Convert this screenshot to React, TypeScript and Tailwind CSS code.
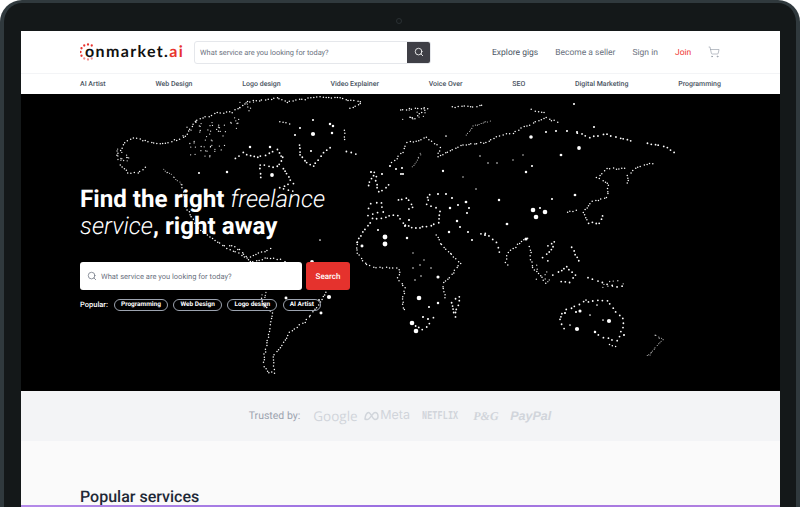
import React from "react";
import { Search, ShoppingCart } from "lucide-react";

type P = [number, number];
let seed = 7;
const rnd = () => {
  seed = (seed * 16807) % 2147483647;
  return seed / 2147483647;
};

// all map coordinates are page pixels; the svg origin is the hero's corner (21,94)
const chains: [number, P[]][] = [
  [3, [[233,112],[247,102],[277,98],[287,102],[317,97],[340,98],[363,103]]],
  [3, [[117,155],[123,145],[133,138],[143,140],[163,144],[183,138],[197,120],[217,113],[233,112]]],
  [3, [[120,165],[128,173],[138,173],[147,165]]],
  [2, [[163,170],[172,175],[182,185]]],
  [3, [[182,185],[187,210],[200,230],[227,248],[247,258],[273,248]]],
  [3, [[230,245],[240,250],[250,262],[268,258],[283,260]]],
  [3, [[327,290],[320,302],[307,320],[290,333],[280,347],[273,357],[275,373],[267,372],[263,363],[267,343],[272,313],[263,303],[260,295]]],
  [4, [[300,145],[300,155],[307,163],[313,166],[318,160],[327,150],[332,145]]],
  [3, [[280,122],[293,125]]],
  [3, [[345,130],[345,143]]],
  [4, [[347,152],[360,155]]],
  [4, [[235,158],[243,153],[257,158],[277,150],[283,158],[277,167],[260,165],[260,182]]],
  [4, [[283,168],[293,183],[280,188],[297,192]]],
  [3, [[350,108],[363,102]]],
  [3, [[453,107],[485,106]]],
  [3, [[400,110],[427,108],[415,118],[407,118]]],
  [3, [[392,163],[403,152],[407,143],[427,138],[440,147],[438,157],[450,150],[463,145],[483,143],[497,137],[513,133],[533,123],[547,118],[560,123]]],
  [4, [[577,133],[590,138],[607,134],[620,138],[635,142]]],
  [4, [[647,143],[667,147],[678,155]]],
  [2, [[467,135],[475,125],[492,121]]],
  [3, [[532,110],[547,113]]],
  [2, [[413,167],[422,152]]],
  [3, [[628,183],[628,175],[638,167],[655,163]]],
  [3, [[625,168],[607,169],[597,178],[608,183],[607,197],[590,203],[583,212],[588,223]]],
  [3, [[567,212],[580,210]]],
  [4, [[588,223],[600,223],[605,213]]],
  [4, [[548,245],[555,242],[552,250],[543,257],[548,260],[553,257]]],
  [4, [[572,248],[577,257],[580,265]]],
  [3, [[527,238],[508,252],[505,262],[510,267]]],
  [5, [[500,252],[497,242],[485,234],[477,235]]],
  [3, [[530,247],[532,268],[542,278],[547,285]]],
  [4, [[553,275],[558,272],[567,267],[575,275],[570,282],[557,281]]],
  [5, [[588,278],[603,282],[617,287],[627,287]]],
  [4, [[562,313],[560,320],[565,333]]],
  [5, [[595,332],[603,338],[617,340],[623,328],[623,318],[613,308],[607,300],[583,302],[567,310],[562,313]]],
  [2, [[655,335],[663,340],[655,347],[650,355],[645,356]]],
  [3, [[609,344],[615,347],[612,350]]],
  [3, [[357,242],[357,253],[367,265],[380,268],[393,268],[400,269],[398,278],[405,288],[402,305],[405,313]]],
  [5, [[412,323],[423,330],[430,323],[437,313]]],
  [3, [[445,298],[443,283],[450,277],[460,263],[452,255],[440,243],[435,232]]],
  [4, [[452,302],[460,297],[455,317],[452,302]]],
  [4, [[357,242],[370,223],[373,219],[398,215],[403,223],[412,228],[427,227],[438,222],[440,208]]],
  [5, [[427,198],[430,195],[427,205],[440,210]]],
  [5, [[368,215],[370,203],[382,203],[383,212],[368,215]]],
  [4, [[398,200],[407,198],[413,207],[405,212]]],
  [4, [[368,185],[375,172],[378,192],[393,183]]],
];

const scatter: [number, number, number, number, number][] = [
  [183, 120, 45, 32, 42],
  [116, 148, 13, 14, 14],
  [210, 116, 30, 14, 12],
  [238, 102, 18, 10, 8],
  [190, 150, 20, 8, 6],
  [262, 270, 4, 28, 8],
  [536, 262, 14, 22, 8],
  [600, 280, 24, 10, 8],
  [400, 108, 28, 12, 10],
];

const bigDots: [number, number, number][] = [
  [313,134,2],[227,172,1.2],[199,173,1],[250,147,1.2],[270,147,1.2],[272,175,1.8],[330,124,1.2],[333,126,1.2],[332,133,1.2],[313,120,1],[300,128,1],[295,135,1],[311,151,1],
  [531,137,1.7],[579,148,1.8],[561,155,1.3],[533,210,2.2],[545,212,2.2],[536,217,2.2],[540,208,1],[552,199,1],[575,195,1.3],[499,200,1.2],[507,224,1.3],[526,172,1.2],[443,171,1.1],
  [402,168,1],[385,237,2.3],[385,244,2.3],[362,246,1.4],[419,298,2.2],[438,277,1.5],[407,238,1.2],[412,323,2.2],[416,331,2.2],[577,329,2],[609,321,2],[580,311,1.5],[595,332,1.2],[532,166,1],
  [438,194,1],[446,194,1],[452,198,1],[466,202,1.3],[458,205,1],[469,208,1],[467,213,1],[450,208,1.2],[457,221,1.2],[449,232,1.2],[460,227,1],[468,232,1],[472,240,1],[485,235,1],[526,239,1.5],
  [565,313,1],[576,312,1],[624,335,1],[603,320,.8],[590,315,.8],[570,325,.8],[586,300,.8],[597,305,.8],
  [423,317,1],[428,319,1],[429,307,1],[438,303,1.2],[415,280,.7],[420,265,.7],[413,268,.7],[431,268,.7],[421,276,.7],[413,253,.6],[424,260,.6],
  [574,104,1],[594,127,1],[546,132,1],[556,131,1],[567,131,1],[577,132,1],[446,136,.8],[480,156,.7],[488,163,.7],[497,163,.7],[513,160,.6],[523,155,.6],[463,177,.6],[476,189,.7],
  [320,240,.8],[312,262,1.8],[329,297,2],[319,300,.9],[321,313,1.4],[285,262,.9],[286,298,1.4],
  [371,172,1],[390,166,1],[396,169,1],[382,174,1],[403,174,1],[401,174,1],[378,230,1],[405,226,1],[409,220,1],
];

const dots: [number, number, number, number][] = [];
for (const [step, pts] of chains) {
  for (let i = 0; i < pts.length - 1; i++) {
    const [a, b] = pts[i];
    const [c, d] = pts[i + 1];
    const n = Math.max(1, Math.round(Math.hypot(c - a, d - b) / step));
    for (let j = 0; j < n; j++) {
      const t = j / n;
      dots.push([
        a + (c - a) * t + (rnd() - 0.5) * 1.6,
        b + (d - b) * t + (rnd() - 0.5) * 1.6,
        step <= 2 ? 0.55 : step === 3 ? 0.75 : 0.9,
        step <= 2 ? 0.8 : 1,
      ]);
    }
  }
}
for (const [x, y, w, h, n] of scatter) {
  for (let i = 0; i < n; i++) dots.push([x + rnd() * w, y + rnd() * h, 0.65, 0.9]);
}
for (const [x, y, r] of bigDots) dots.push([x, y, r * 1.05, 1]);

function WorldMap() {
  return (
    <svg className="absolute inset-0" width="759" height="297" viewBox="21 94 759 297" aria-hidden="true">
      {dots.map(([x, y, r, o], i) => (
        <circle key={i} cx={x} cy={y} r={r} fill="#fff" opacity={o} />
      ))}
    </svg>
  );
}

function Logo() {
  const ring = Array.from({ length: 12 }, (_, i) => {
    const a = ((i * 30 - 60) * Math.PI) / 180;
    const o = i >= 1 && i <= 3 ? 0 : i >= 4 && i <= 6 ? 0.55 : 1;
    return [8 + 7.5 * Math.cos(a), 9 + 7.5 * Math.sin(a), 1.15, o] as const;
  });
  return (
    <div className="relative flex h-5 w-[103px] shrink-0 items-center pl-[5px]">
      <svg className="absolute left-0 top-[1px]" width="18" height="18" viewBox="0 0 18 18" aria-hidden="true">
        {ring.map(([x, y, r, o], i) => (
          <circle key={i} cx={x} cy={y} r={r} fill="#e8332e" opacity={o} />
        ))}
      </svg>
      <span className="text-[16px] font-bold leading-none tracking-[1.35px] text-[#111] font-['Lato','Liberation_Sans',sans-serif]">
        onmarket.<span className="text-[#e8332e]">ai</span>
      </span>
    </div>
  );
}

const subNav = ["AI Artist", "Web Design", "Logo design", "Video Explainer", "Voice Over", "SEO", "Digital Marketing", "Programming"];
const chips = ["Programming", "Web Design", "Logo design", "AI Artist"];

export default function App() {
  return (
    <div className="h-[507px] w-[800px] overflow-hidden bg-white font-['Roboto',sans-serif] [text-rendering:geometricPrecision]">
      <div className="relative h-[507px] rounded-t-[22px] border-x-[4px] border-t-[3px] border-[#30393d] bg-[#141819] pl-[17px] pr-[16px] pt-[28px]">
        <div className="absolute left-[392px] top-[15px] h-[6px] w-[6px] rounded-full border border-[#2a3033]" />
        <div className="flex h-[476px] flex-col bg-[#fafafa]">
          <header className="flex h-[42px] items-center whitespace-nowrap bg-white px-[59px]">
            <Logo />
            <div className="ml-[11px] flex h-[23px] w-[237px] shrink-0 items-center overflow-hidden rounded-[3px] border border-[#e5e7eb] bg-white">
              <span className="flex-1 pl-[5px] pt-[2px] text-[7.4px] text-[#6b7280]">What service are you looking for today?</span>
              <span className="flex h-[23px] w-[23px] items-center justify-center bg-[#3f3f46]">
                <Search size={10} color="#fff" strokeWidth={2} />
              </span>
            </div>
            <nav className="ml-[61px] flex items-center text-[8.5px] text-[#6b7280]">
              <span className="pt-[2px] text-[#4b5563]">Explore gigs</span>
              <span className="ml-[17px] pt-[2px]">Become a seller</span>
              <span className="ml-[17px] pt-[2px]">Sign in</span>
              <span className="ml-[17px] pt-[2px] text-[#ef3b36]">Join</span>
              <ShoppingCart className="ml-[17px]" size={12} color="#8b93a0" strokeWidth={1.2} />
            </nav>
          </header>
          <div className="flex h-[21px] items-center justify-between border-t border-[#f3f4f6] bg-white px-[59px] text-[7px] font-medium text-[#4b5563]">
            {subNav.map((s) => (
              <span key={s}>{s}</span>
            ))}
          </div>
          <section className="relative h-[297px] bg-black px-[59px] pt-[92px]">
            <WorldMap />
            <div className="relative">
              <h1 className="text-[24.2px] font-bold leading-[26.5px] text-white">
                Find the right <span className="font-light italic">freelance</span>
                <br />
                <span className="font-light italic">service</span>, right away
              </h1>
              <div className="mt-[23px] flex h-[28px] gap-[4px]">
                <div className="flex w-[222px] items-center gap-[4px] rounded-[3px] bg-white pl-[7px]">
                  <Search size={10} color="#6b7280" strokeWidth={1.8} />
                  <span className="pt-[2px] text-[7.5px] text-[#6b7280]">What service are you looking for today?</span>
                </div>
                <div className="flex w-[44px] items-center justify-center rounded-[3px] bg-[#e5322d] pt-[2px] text-[8px] font-medium text-white">
                  Search
                </div>
              </div>
              <div className="mt-[9px] flex items-center text-[7.5px] text-white">
                <span className="mr-[6px] font-medium">Popular:</span>
                <div className="flex gap-[5.5px]">
                  {chips.map((c) => (
                    <span key={c} className="flex h-[12px] items-center rounded-full border border-[#9ca3af] px-[6px] text-[6.5px] font-bold">
                      {c}
                    </span>
                  ))}
                </div>
              </div>
            </div>
          </section>
          <section className="flex h-[50px] items-center justify-center bg-[#f3f4f6] pr-[1px]">
            <span className="text-[10.5px] text-[#9ca3af]">Trusted by:</span>
            <div className="ml-[13px] flex items-center text-[#d1d5db]">
              <span className="w-[51px] text-[13.5px] font-['Open_Sans',sans-serif]">Google</span>
              <span className="flex w-[58px] items-center text-[12.5px] font-['Inter',sans-serif]">
                <svg width="15" height="10" viewBox="0 0 15 9" fill="none" stroke="#d1d5db" strokeWidth="1.5" aria-hidden="true">
                  <path d="M1 7.5C1 4 3 1 4.500 1c2.500 0 4 7 6.500 7C12.500 8 14 7 14 5c0-2.500-1.500-4-3-4C8.500 1 6.500 8 3 8 1.800 8 1 7.500 1 7.500Z" />
                </svg>
                <span className="ml-[1px]">Meta</span>
              </span>
              <span className="w-[51px] origin-left scale-x-[0.7] whitespace-nowrap text-[12px] font-bold tracking-[0.2px] font-['Liberation_Mono',monospace]">
                NETFLIX
              </span>
              <span className="w-[37px] text-[12px] font-bold italic font-['Liberation_Serif',serif]">P&amp;G</span>
              <span className="text-[12.5px] font-bold italic font-['Liberation_Sans',sans-serif]">PayPal</span>
            </div>
          </section>
          <section className="flex flex-1 flex-col justify-end pl-[59px]">
            <h2 className="text-[16px] font-medium leading-[16px] text-[#1f2937]">Popular services</h2>
          </section>
          <div className="h-[2px] bg-gradient-to-r from-[#b48ae8] via-[#9a6ee0] to-[#b583e0]" />
        </div>
      </div>
    </div>
  );
}
